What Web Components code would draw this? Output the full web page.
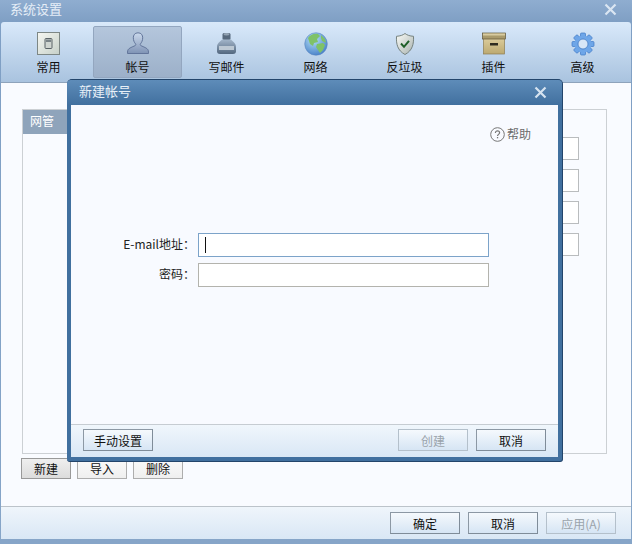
<!DOCTYPE html>
<html>
<head>
<meta charset="utf-8">
<style>
    html, body { margin: 0; padding: 0; background: #8aa8cb; }
    body { width: 632px; height: 544px; overflow: hidden; font: 12px "Noto Sans CJK SC", "Liberation Sans", sans-serif; color: #1a1a1a; }
</style>
</head>
<body>
<settings-window>
    <settings-tab slot="tabs" label="常用" icon="general"></settings-tab>
    <settings-tab slot="tabs" label="帐号" icon="account" active></settings-tab>
    <settings-tab slot="tabs" label="写邮件" icon="compose"></settings-tab>
    <settings-tab slot="tabs" label="网络" icon="network"></settings-tab>
    <settings-tab slot="tabs" label="反垃圾" icon="spam"></settings-tab>
    <settings-tab slot="tabs" label="插件" icon="plugin"></settings-tab>
    <settings-tab slot="tabs" label="高级" icon="advanced"></settings-tab>

    <account-panel></account-panel>

    <ui-button slot="footer">确定</ui-button>
    <ui-button slot="footer">取消</ui-button>
    <ui-button slot="footer" disabled>应用(A)</ui-button>

    <new-account-dialog slot="overlay"></new-account-dialog>
</settings-window>

<script>
const ICONS = {
    general: `<svg width="24" height="24" viewBox="0 0 24 24">
        <defs><linearGradient id="g" x1="0" y1="0" x2="1" y2="1"><stop offset="0" stop-color="#f6f7f2"/><stop offset="1" stop-color="#c6d0c8"/></linearGradient></defs>
        <rect x="0.500" y="0.500" width="22" height="22" fill="url(#g)" stroke="#7d8785"/>
        <rect x="8" y="6.500" width="7" height="10" rx="1" fill="#cfd5d0" stroke="#596266"/>
        <rect x="9" y="7.500" width="5" height="2.500" fill="#7a8488"/>
    </svg>`,
    account: `<svg width="24" height="24" viewBox="0 0 24 24">
        <defs><linearGradient id="a" x1="0" y1="0" x2="0" y2="1"><stop offset="0" stop-color="#cbd9ec"/><stop offset="1" stop-color="#7f93b5"/></linearGradient></defs>
        <path d="M12 .8c3.400 0 4.700 2.500 4.700 5 0 2.600-1.100 4.800-2.200 6-.5.600-.3 1.500.5 1.900 2.600 1.200 6 2.300 7 4.100.6 1.100.5 3.700.5 3.700H1.500s-.1-2.600.5-3.700c1-1.800 4.400-2.900 7-4.100.8-.4 1-1.300.5-1.900-1.100-1.200-2.200-3.400-2.200-6 0-2.500 1.300-5 4.700-5z" fill="url(#a)" stroke="#62759a"/>
    </svg>`,
    compose: `<svg width="24" height="24" viewBox="0 0 24 24">
        <defs><linearGradient id="c" x1="0" y1="0" x2="0" y2="1"><stop offset="0" stop-color="#a3b6ca"/><stop offset="1" stop-color="#52677f"/></linearGradient></defs>
        <rect x="7.500" y="1" width="8" height="7" rx="1.500" fill="#56687c"/>
        <ellipse cx="11.500" cy="2.300" rx="3" ry="1.200" fill="#93a3b3"/>
        <path d="M7 7.500h9c1 1.500 5 3.500 5 7.500v4.500c0 1.700-1.500 2.500-3 2.500H5c-1.500 0-3-.8-3-2.500V15c0-4 4-6 5-7.500z" fill="url(#c)"/>
        <rect x="4" y="14" width="15" height="4" fill="#bcc8d3"/>
    </svg>`,
    network: `<svg width="24" height="24" viewBox="0 0 24 24">
        <defs><radialGradient id="n" cx=".4" cy=".3" r=".8"><stop offset="0" stop-color="#b5e0f6"/><stop offset="1" stop-color="#3e78c4"/></radialGradient></defs>
        <circle cx="12" cy="12" r="11.300" fill="url(#n)" stroke="#5682bc" stroke-width=".5"/>
        <path d="M4 6c2-3 6-5 10-4l2 2-3 3 1 3-4 1-1 3-3-2-1-3zM13 12l6-1 2 2-2 5-3 3-2-3-2-3zM17 3l4 4 1 4-4-2-1-3z" fill="#7fc267"/>
    </svg>`,
    spam: `<svg width="24" height="24" viewBox="0 0 24 24">
        <defs><linearGradient id="s" x1="0" y1="0" x2="1" y2="1"><stop offset="0" stop-color="#fafbf6"/><stop offset="1" stop-color="#a9b3b0"/></linearGradient></defs>
        <path d="M12 1.500c2.200 1.700 4.700 2.500 8.500 2.800.4 7.800-1 14.200-8.500 18.200C4.500 18.500 3.100 12.100 3.500 4.300 7.300 4 9.800 3.200 12 1.500z" fill="url(#s)" stroke="#76827f"/>
        <path d="M8 11.500l3 3.300 5-6" fill="none" stroke="#1f5f27" stroke-width="2"/>
    </svg>`,
    plugin: `<svg width="24" height="24" viewBox="0 0 24 24">
        <defs><linearGradient id="p" x1="0" y1="0" x2="0" y2="1"><stop offset="0" stop-color="#dccd9c"/><stop offset="1" stop-color="#bca970"/></linearGradient></defs>
        <rect x="1.500" y="6" width="21" height="16" fill="url(#p)" stroke="#8d7d50" stroke-width=".7"/>
        <rect x="0.500" y="1" width="23" height="6" fill="#a99a6b" stroke="#5f5537" stroke-width=".7"/>
        <rect x="1" y="1.500" width="22" height="2" fill="#d8cba0"/>
        <rect x="8" y="11" width="8" height="2.500" fill="#2f2c20"/>
    </svg>`,
    advanced: `<svg width="24" height="24" viewBox="0 0 24 24">
        <g fill="#6ea6e8" stroke="#3f78c4" stroke-width=".7">
            <rect x="9.500" y="1" width="5" height="5" rx="1"/>
            <rect x="9.500" y="1" width="5" height="5" rx="1" transform="rotate(45 12 12)"/>
            <rect x="9.500" y="1" width="5" height="5" rx="1" transform="rotate(90 12 12)"/>
            <rect x="9.500" y="1" width="5" height="5" rx="1" transform="rotate(135 12 12)"/>
            <rect x="9.500" y="1" width="5" height="5" rx="1" transform="rotate(180 12 12)"/>
            <rect x="9.500" y="1" width="5" height="5" rx="1" transform="rotate(225 12 12)"/>
            <rect x="9.500" y="1" width="5" height="5" rx="1" transform="rotate(270 12 12)"/>
            <rect x="9.500" y="1" width="5" height="5" rx="1" transform="rotate(315 12 12)"/>
        </g>
        <circle cx="12" cy="12" r="6.800" fill="none" stroke="#6ea6e8" stroke-width="3.600"/>
        <circle cx="12" cy="12" r="5" fill="#d7e6f7" stroke="#3f78c4" stroke-width=".8"/>
    </svg>`
};

class SettingsTab extends HTMLElement {
    constructor() {
        super();
        this.attachShadow({ mode: 'open' });
    }
    connectedCallback() {
        this.shadowRoot.innerHTML = `
            <style>
                :host {
                    box-sizing: border-box;
                    width: 89px;
                    height: 52px;
                    display: flex;
                    flex-direction: column;
                    align-items: center;
                    padding-top: 5px;
                    border: 1px solid transparent;
                    border-radius: 2px;
                    color: #111;
                }
                :host([active]) {
                    background: linear-gradient(#b4c6dc, #9cb0c9);
                    border-color: #93a6bf;
                }
                .icon { height: 24px; line-height: 0; }
                .label { margin-top: 3px; line-height: 16px; font-size: 12px; }
            </style>
            <div class="icon">${ICONS[this.getAttribute('icon')]}</div>
            <div class="label">${this.getAttribute('label')}</div>
        `;
    }
}
customElements.define('settings-tab', SettingsTab);

class UiButton extends HTMLElement {
    constructor() {
        super();
        this.attachShadow({ mode: 'open' });
        this.shadowRoot.innerHTML = `
            <style>
                :host {
                    box-sizing: border-box;
                    display: inline-flex;
                    align-items: center;
                    justify-content: center;
                    width: 70px;
                    height: 22px;
                    font-size: 12px;
                    color: #111;
                    background: linear-gradient(#f5f9fd, #d6e5f4);
                    border: 1px solid #8c98a4;
                    border-right-color: #7f8c99;
                    border-bottom-color: #7f8c99;
                }
                :host([disabled]) {
                    color: #9aa3ab;
                    border-color: #b4c0cb;
                }
                :host([plain]) {
                    width: 50px;
                    height: 21px;
                    background: linear-gradient(#fafafa, #efefef);
                    border-color: #adadad;
                }
                :host([pressed]) {
                    background: linear-gradient(#efefef, #dcdcdc);
                    border-color: #999;
                }
            </style>
            <slot></slot>
        `;
    }
}
customElements.define('ui-button', UiButton);

class TextField extends HTMLElement {
    constructor() {
        super();
        this.attachShadow({ mode: 'open' });
        this.shadowRoot.innerHTML = `
            <style>
                :host {
                    box-sizing: border-box;
                    display: block;
                    height: 24px;
                    background: #fff;
                    border: 1px solid #b3b3ad;
                }
                :host([focused]) {
                    border-color: #7ca3c9;
                }
                .caret { display: none; width: 1px; height: 16px; margin: 3px 0 0 6px; background: #111; }
                :host([focused]) .caret { display: block; }
            </style>
            <div class="caret"></div>
        `;
    }
}
customElements.define('text-field', TextField);

class AccountPanel extends HTMLElement {
    constructor() {
        super();
        this.attachShadow({ mode: 'open' });
        this.shadowRoot.innerHTML = `
            <style>
                :host { display: block; padding: 26px 24px 0 20px; }
                .box {
                    box-sizing: border-box;
                    margin-left: 1px;
                    height: 345px;
                    border: 1px solid #ccd0d4;
                    display: flex;
                }
                .list { width: 200px; }
                .list-head {
                    height: 24px;
                    line-height: 22px;
                    padding-left: 7px;
                    background: #8fa4bb;
                    color: #fff;
                    font-size: 12px;
                }
                .fields {
                    flex: 1;
                    display: flex;
                    flex-direction: column;
                    gap: 9px;
                    padding: 27px 27px 0 0;
                    align-items: flex-end;
                }
                .fields div {
                    box-sizing: border-box;
                    width: 100px;
                    height: 23px;
                    background: #fff;
                    border: 1px solid #b9bcbe;
                }
                .actions { display: flex; gap: 6px; margin-top: 4px; }
            </style>
            <div class="box">
                <div class="list"><div class="list-head">网管</div></div>
                <div class="fields"><div></div><div></div><div></div><div></div></div>
            </div>
            <div class="actions">
                <ui-button plain pressed>新建</ui-button>
                <ui-button plain>导入</ui-button>
                <ui-button plain>删除</ui-button>
            </div>
        `;
    }
}
customElements.define('account-panel', AccountPanel);

class NewAccountDialog extends HTMLElement {
    constructor() {
        super();
        this.attachShadow({ mode: 'open' });
        this.shadowRoot.innerHTML = `
            <style>
                :host {
                    position: absolute;
                    left: 67px;
                    top: 79px;
                    box-sizing: border-box;
                    width: 496px;
                    height: 383px;
                    display: flex;
                    flex-direction: column;
                    padding: 0 4px 4px;
                    background: #41709f;
                    border: 1px solid #23456b;
                    border-width: 1px 1px 1px 0;
                    border-radius: 5px 5px 3px 3px;
                }
                .title {
                    height: 25px;
                    flex: none;
                    margin: 0 -4px;
                    padding: 0 15px 0 12px;
                    display: flex;
                    align-items: center;
                    justify-content: space-between;
                    color: #e8f0f8;
                    font-size: 13px;
                    background: linear-gradient(#5e8cb9, #41709f);
                    border-radius: 4px 4px 0 0;
                }
                .title span { padding-bottom: 4px; }
                .body { flex: 1; background: #f8faff; position: relative; display: flex; flex-direction: column; }
                .help {
                    align-self: flex-end;
                    margin: 21px 27px 0 0;
                    display: flex;
                    align-items: center;
                    gap: 2px;
                    color: #6b6b6b;
                    font-size: 12px;
                    line-height: 16px;
                }
                .form {
                    margin-top: 91px;
                    display: grid;
                    grid-template-columns: 124px 291px;
                    column-gap: 3px;
                    row-gap: 6px;
                    align-items: center;
                    font-size: 12px;
                }
                .form label { text-align: right; color: #222; padding-bottom: 3px; }
                .foot {
                    margin-top: auto;
                    height: 33px;
                    box-sizing: border-box;
                    padding: 4px 12px 0 12px;
                    display: flex;
                    gap: 8px;
                    background: linear-gradient(#f0f6fc, #d9e7f5);
                    border-top: 1px solid #c6ccd2;
                }
                .foot .first { margin-right: auto; }
            </style>
            <div class="title">
                <span>新建帐号</span>
                <svg width="13" height="13" viewBox="0 0 13 13"><path d="M1.500 1.500l10 10M11.500 1.500l-10 10" stroke="#d6e3f0" stroke-width="2.200" fill="none"/></svg>
            </div>
            <div class="body">
                <div class="help">
                    <svg width="15" height="15" viewBox="0 0 15 15">
                        <circle cx="7.500" cy="7.500" r="6.800" fill="none" stroke="#777" stroke-width="1"/>
                        <path d="M5.400 6c0-1.400 1-2.200 2.100-2.200s2.100.8 2.100 2c0 1.600-2.100 1.600-2.100 3.300" fill="none" stroke="#777" stroke-width="1.200"/>
                        <rect x="6.900" y="10" width="1.300" height="1.300" fill="#777"/>
                    </svg>
                    <span>帮助</span>
                </div>
                <div class="form">
                    <label>E-mail地址：</label><text-field focused></text-field>
                    <label>密码：</label><text-field></text-field>
                </div>
                <div class="foot">
                    <ui-button class="first">手动设置</ui-button>
                    <ui-button disabled>创建</ui-button>
                    <ui-button>取消</ui-button>
                </div>
            </div>
        `;
    }
}
customElements.define('new-account-dialog', NewAccountDialog);

class SettingsWindow extends HTMLElement {
    constructor() {
        super();
        this.attachShadow({ mode: 'open' });
        this.shadowRoot.innerHTML = `
            <style>
                :host {
                    position: relative;
                    box-sizing: border-box;
                    display: flex;
                    flex-direction: column;
                    width: 632px;
                    height: 544px;
                    padding: 0 1px 5px;
                    background: linear-gradient(#8fadd0 0, #7f9fc4 22px, #86a5c8 100%);
                }
                .title {
                    height: 22px;
                    flex: none;
                    box-sizing: border-box;
                    margin: 0 -1px;
                    padding: 1px 15px 0 10px;
                    display: flex;
                    align-items: flex-start;
                    justify-content: space-between;
                    color: #e6eef7;
                    font-size: 13px;
                }
                .title span { line-height: 15px; }
                .title svg { margin-top: 2px; }
                .toolbar {
                    height: 61px;
                    flex: none;
                    box-sizing: border-box;
                    display: flex;
                    padding: 4px 0 0 3px;
                    background: linear-gradient(#d9e9fa, #a9c3df);
                    border-bottom: 1px solid #8ea3bb;
                    border-radius: 3px 3px 0 0;
                }
                .content { flex: 1; background: #f9fbff; }
                .footer {
                    height: 33px;
                    flex: none;
                    box-sizing: border-box;
                    display: flex;
                    justify-content: flex-end;
                    gap: 8px;
                    padding: 5px 15px 0 0;
                    background: linear-gradient(#eff5fb, #d9e7f5);
                    border-top: 1px solid #bcc3ca;
                }
            </style>
            <div class="title">
                <span>系统设置</span>
                <svg width="13" height="13" viewBox="0 0 13 13"><path d="M1.500 1.500l10 10M11.500 1.500l-10 10" stroke="#dbe6f2" stroke-width="2.200" fill="none"/></svg>
            </div>
            <div class="toolbar"><slot name="tabs"></slot></div>
            <div class="content"><slot></slot></div>
            <div class="footer"><slot name="footer"></slot></div>
            <slot name="overlay"></slot>
        `;
    }
}
customElements.define('settings-window', SettingsWindow);
</script>
</body>
</html>
